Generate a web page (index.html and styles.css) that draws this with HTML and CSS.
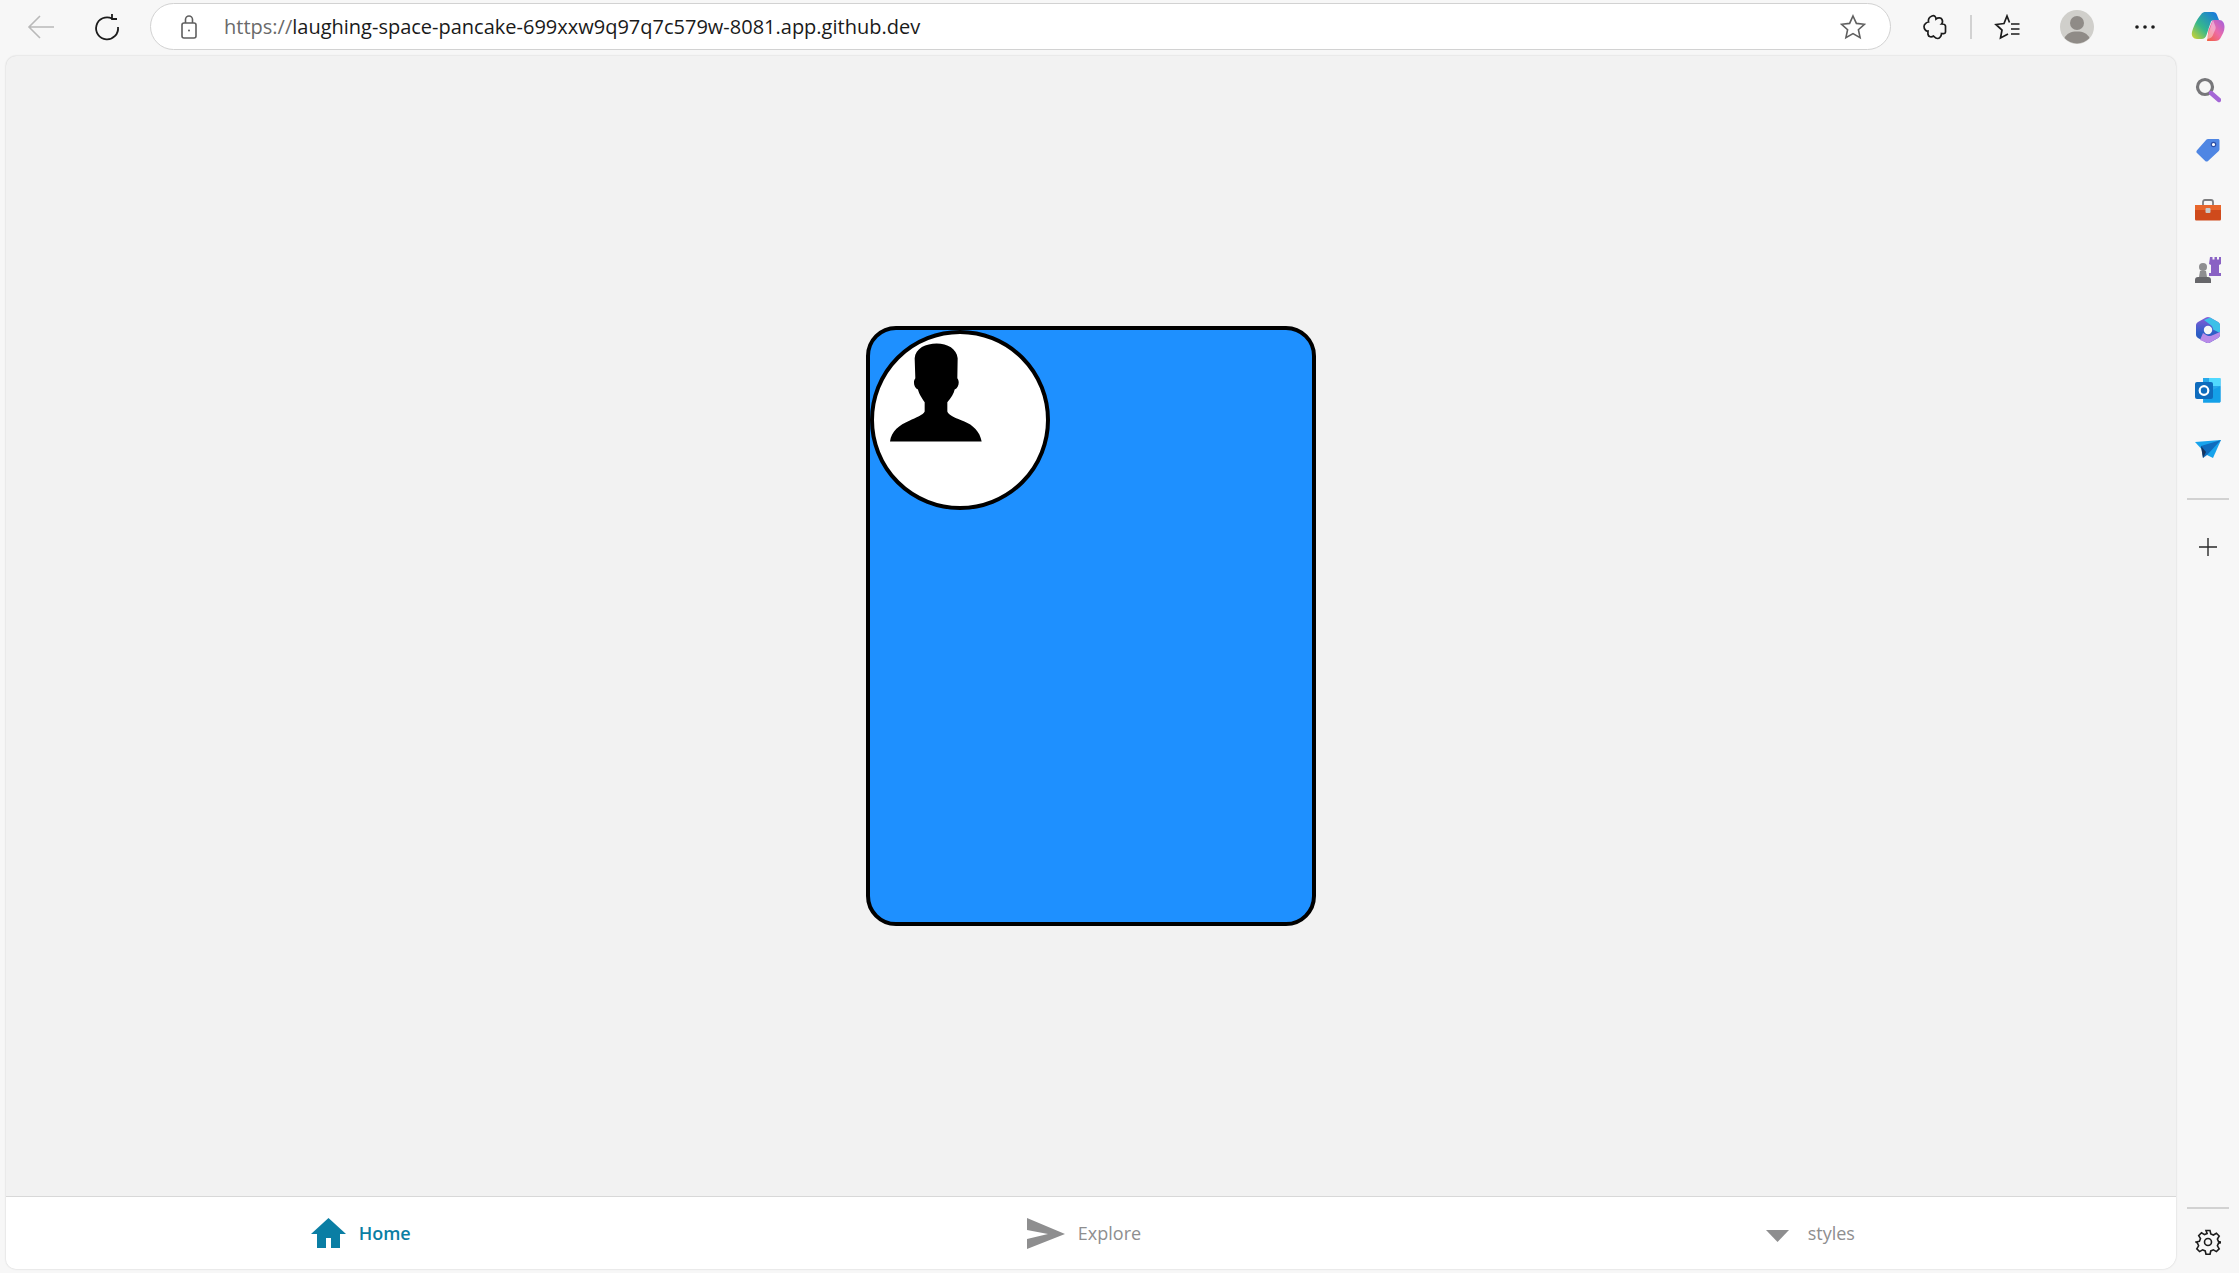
FILE: index.html
```html
<!DOCTYPE html>
<html lang="en">

<head>
  <meta charset="UTF-8">
  <title>laughing-space-pancake</title>
  <link rel="stylesheet" href="styles.css">
</head>

<body>
  <!-- Browser toolbar -->
  <header class="toolbar">
    <span class="toolButton backButton">
      <svg width="28" height="26" viewBox="0 0 28 26" fill="none" stroke="#b9b9b9" stroke-width="1.6"><path d="M27 13H3M13 2 2 13l11 11"/></svg>
    </span>
    <span class="toolButton reloadButton">
      <svg width="28" height="28" viewBox="0 0 28 28" fill="none" stroke="#1c1c1c" stroke-width="1.8"><path d="M19 5.500A11 11 0 1 0 25 14M19 1v5h5"/></svg>
    </span>
    <div class="addressBar">
      <svg class="lockIcon" width="16" height="24" viewBox="0 0 16 24" fill="none" stroke="#5f5f5f" stroke-width="1.6"><rect x="1" y="8" width="14" height="15" rx="2"/><path d="M4.500 8V4.500a3.500 3.500 0 0 1 7 0V8"/><circle cx="8" cy="15.500" r="1" fill="#5f5f5f" stroke="none"/></svg>
      <span class="url"><span class="urlScheme">https://</span>laughing-space-pancake-699xxw9q97q7c579w-8081.app.github.dev</span>
      <svg class="starIcon" width="26" height="26" viewBox="0 0 26 26" fill="none" stroke="#5f5f5f" stroke-width="1.6"><path d="m13 2 3.400 7.400 8 .9-6 5.400 1.700 8L13 19.600l-7.100 4.100 1.700-8-6-5.400 8-.9z"/></svg>
    </div>
    <span class="toolButton extButton">
      <svg width="24" height="26" viewBox="0 0 24 26" fill="none" stroke="#1c1c1c" stroke-width="1.7"><path d="M9 2c2.500-1 4 1 4 3 2-1.500 5-1.500 6 .5s.5 3.500-.5 4.500c2 0 4 1 4 2v6c0 1.500-2 2-4 1.500 0 2.500-2 5-4 5s-3-1.500-4-2.500c-2 1.500-5 1-5.500-1.500-.2-1.500 0-3 0-3.500C3 17.500 1 15 1 12.500S4 8 5.500 8C5 5.500 6.500 3 9 2z"/></svg>
    </span>
    <span class="toolDivider"></span>
    <span class="toolButton favButton">
      <svg width="26" height="26" viewBox="0 0 26 26" fill="none" stroke="#1c1c1c" stroke-width="1.7"><path d="M15.500 8.500 13 2l-3 7.500-8 1 6 5.500-1.500 8L14 20M17 10h8.500M17 15h8.500M17 20h8.500"/></svg>
    </span>
    <span class="profile">
      <svg width="34" height="34" viewBox="0 0 34 34"><circle cx="17" cy="17" r="17" fill="#d0cfcb"/><circle cx="17" cy="13" r="7" fill="#8f8b87"/><path d="M4.500 28C7 23 11 21.500 17 21.500S27 23 29.500 28A17 17 0 0 1 4.500 28z" fill="#8f8b87"/></svg>
    </span>
    <span class="toolButton moreButton">
      <svg width="20" height="4" viewBox="0 0 20 4" fill="#1c1c1c"><circle cx="2" cy="2" r="1.800"/><circle cx="10" cy="2" r="1.800"/><circle cx="18" cy="2" r="1.800"/></svg>
    </span>
    <span class="toolButton copilotButton">
      <svg width="34" height="32" viewBox="0 0 34 32">
        <defs>
          <linearGradient id="copA" x1="0" y1="1" x2="1" y2="0"><stop offset="0" stop-color="#d8d42c"/><stop offset=".4" stop-color="#36b88c"/><stop offset="1" stop-color="#1470e8"/></linearGradient>
          <linearGradient id="copB" x1="0" y1="1" x2="1" y2="0"><stop offset="0" stop-color="#f4603c"/><stop offset=".5" stop-color="#ec6ba8"/><stop offset="1" stop-color="#a05fe0"/></linearGradient>
        </defs>
        <path d="M16 30h8c3 0 4.500-1 5.500-3 2-3.500 4-7 4-11 0-4-2-7-5-7h-7l-4 10z" fill="url(#copB)"/>
        <path d="M10 3.500C11 1.500 13 1 15 1h7c2 0 3.500 1 4 3l2 5h-5c-2 0-3 1-3.500 3l-4 12c-.8 2.500-2.500 4-5 4H6c-3.500 0-6-3-5-7 1-4 4-12 9-17.500z" fill="url(#copA)"/>
        <path d="M22 9 15.500 28c2.500 0 5-1 6-3l3-7c.5-1.500 0-3-1-5z" fill="#fff" opacity=".4"/>
      </svg>
    </span>
  </header>

  <div class="main">
    <!-- Page area -->
    <div class="panel">
      <div class="content">
        <div class="card">
          <div class="avatar">
            <svg class="silhouette" width="92" height="99" viewBox="122 85 276 296"><path d="M122 380C126 350 150 330 180 318C200 308 222 300 226 290L226 262C214 245 208 234 206 224C194 220 190 200 198 190L196 130C198 100 230 86 262 86C295 86 322 102 325 130L324 190C332 200 328 220 316 224C314 235 305 250 294 262L294 290C298 302 320 310 345 320C370 330 392 350 397 380Z"/></svg>
          </div>
        </div>
      </div>

      <nav class="tabBar">
        <a class="tab tabActive">
          <svg width="35" height="30" viewBox="0 0 35 30" fill="#0a7ea4"><path d="M17.500 0 35 16h-6v14h-9V20h-5v10H6V16H0z"/></svg>
          <span>Home</span>
        </a>
        <a class="tab">
          <svg width="38" height="31" viewBox="0 0 38 31" fill="#8e8e8f"><path d="M0 0 38 16 0 31V21L21 16 0 12z"/></svg>
          <span>Explore</span>
        </a>
        <a class="tab">
          <svg class="caret" width="23" height="12" viewBox="0 0 23 12" fill="#8e8e8f"><path d="M0 0H23L11.500 12z"/></svg>
          <span>styles</span>
        </a>
      </nav>
    </div>

    <!-- Edge sidebar -->
    <aside class="sidebar">
      <span class="sideItem">
        <svg width="26" height="26" viewBox="0 0 26 26" fill="none"><circle cx="10" cy="10" r="7.500" stroke="#77777a" stroke-width="3.200"/><path d="M16 16l8 7" stroke="#a467d6" stroke-width="4.400" stroke-linecap="round"/></svg>
      </span>
      <span class="sideItem">
        <svg width="26" height="26" viewBox="0 0 26 26"><path d="M13 2h10c1 0 1.500.6 1.500 1.500V12c0 1-.4 1.600-1 2.200L13 24c-.8.800-2 .8-2.800 0L2 16c-.8-.8-.8-2 0-2.800L11.500 2.600c.4-.4 1-.6 1.500-.6z" fill="#4f86e3"/><circle cx="18.500" cy="7.500" r="2.200" fill="#fff" stroke="#2c4fa8" stroke-width="1.200"/></svg>
      </span>
      <span class="sideItem">
        <svg width="28" height="24" viewBox="0 0 28 24"><path d="M9 8V4c0-1 .6-2 2-2h6c1.400 0 2 1 2 2v4" fill="none" stroke="#7d7d7f" stroke-width="1.800"/><path d="M1 7h26v6H1z" fill="#e8662c"/><path d="M1 12h26v9c0 1-.6 1.500-1.500 1.500h-23C1.600 22.500 1 22 1 21z" fill="#cf4a1c"/><rect x="11.500" y="10" width="5" height="5" rx="1" fill="#c9c9c9"/></svg>
      </span>
      <span class="sideItem">
        <svg width="28" height="28" viewBox="0 0 28 28"><path d="M16 1h2.500v2.500h2V1h2.500v2.500h2V1H27v7l-2 1v8h2v3H15v-3h2V9l-2-1z" fill="#8a62c4"/><circle cx="9" cy="11" r="4" fill="#8e8e90"/><path d="M6 15h6l1 6H5z" fill="#8e8e90"/><path d="M1 27v-3c0-2 1-3 3-3h10c2 0 3 1 3 3v3z" fill="#66666a"/></svg>
      </span>
      <span class="sideItem">
        <svg width="26" height="28" viewBox="0 0 26 28"><defs><linearGradient id="msA" x1="0" y1="0" x2="0" y2="1"><stop offset="0" stop-color="#8a5ad8"/><stop offset=".6" stop-color="#2f5fc8"/><stop offset="1" stop-color="#2a55b8"/></linearGradient></defs><path d="M11 1.500c1.300-.7 2.700-.7 4 0l8 4.500c1.300.7 2 2 2 3.500v9c0 1.500-.7 2.800-2 3.500l-8 4.500c-1.300.7-2.700.7-4 0l-8-4.500C1.700 21.300 1 20 1 18.500v-9C1 8 1.700 6.700 3 6z" fill="url(#msA)"/><path d="M15 1.500l8 4.500c1.300.7 2 2 2 3.500V17l-7-3.500c0-2-1-4-3-5L9 4z" fill="#3cc0e8"/><path d="M8 17l4 2.500c2 1 4 .7 6-.5l7-3v2.500c0 1.500-.7 2.800-2 3.500l-8 4.500c-1.300.7-2.700.7-4 0L5 24z" fill="#b88ae8"/><circle cx="13" cy="14" r="4.200" fill="#f7f7f7"/></svg>
      </span>
      <span class="sideItem">
        <svg width="26" height="26" viewBox="0 0 26 26"><path d="M8 1h16c1 0 1.500.5 1.500 1.500V24c0 1-.5 1.500-1.500 1.500H8z" fill="#28a8ea"/><path d="M14 1h11.500v8H14z" fill="#50d9ff"/><path d="M14 15l11.500-6v15c0 1-.5 1.500-1.500 1.500H8z" fill="#14a0e8"/><rect x="0" y="5" width="18" height="17" rx="2" fill="#0f6cbd"/><circle cx="9" cy="13.500" r="4.300" fill="none" stroke="#fff" stroke-width="2.200"/></svg>
      </span>
      <span class="sideItem">
        <svg width="26" height="20" viewBox="0 0 26 20"><path d="M0 2 26 0 18 18l-6-3z" fill="#17a3ec"/><path d="M26 0 6 6l2 12 4-3z" fill="#0f6cbd"/><path d="M6 6l2 12 3-6z" fill="#17345f"/></svg>
      </span>
      <span class="sideDivider"></span>
      <span class="sideItem plusItem">
        <svg width="18" height="18" viewBox="0 0 18 18" stroke="#2a2a2a" stroke-width="1.400"><path d="M9 0v18M0 9h18"/></svg>
      </span>
      <span class="sideSpacer"></span>
      <span class="sideDivider"></span>
      <span class="sideItem gearItem">
        <svg width="26" height="26" viewBox="0 0 26 26" fill="none" stroke="#1c1c1c" stroke-width="1.600"><circle cx="13" cy="13" r="3.500"/><path d="M11 1.500h4l.8 3.400 2.600 1.100 3-1.800 2.800 2.800-1.800 3 1.100 2.600 3.400.8v0l-3.400.8-1.100 2.600 1.800 3-2.800 2.800-3-1.800-2.600 1.100-.8 3.400h-4l-.8-3.400-2.600-1.100-3 1.800-2.800-2.800 1.800-3-1.100-2.600L1 13l3.400-.8 1.100-2.600-1.800-3 2.800-2.800 3 1.800 2.600-1.100z"/></svg>
      </span>
    </aside>
  </div>
</body>

</html>
```

FILE: styles.css
```css
html,
body {
  height: 100%;
  margin: 0;
}

body {
  display: flex;
  flex-direction: column;
  overflow: hidden;
  background-color: #f7f7f7;
  font-family: 'Open Sans', 'Noto Sans', sans-serif;
}

/* Browser toolbar */
.toolbar {
  display: flex;
  align-items: center;
  height: 56px;
  box-sizing: border-box;
  flex-shrink: 0;
  padding: 0 0 3px 19px;
}

.toolButton {
  display: flex;
  align-items: center;
  justify-content: center;
  width: 44px;
  height: 44px;
  flex-shrink: 0;
}

.reloadButton {
  margin-left: 22px;
}

.addressBar {
  display: flex;
  align-items: center;
  width: 1741px;
  height: 47px;
  margin-left: 21px;
  padding: 0 24px 0 30px;
  box-sizing: border-box;
  background-color: #fff;
  border: 1.5px solid #d2d2d2;
  border-radius: 24px;
  flex-shrink: 0;
}

.lockIcon {
  margin-right: 27px;
}

.url {
  flex: 1;
  font-size: 20px;
  color: #1a1a1a;
}

.urlScheme {
  color: #6a6a6a;
}

.extButton {
  margin-left: 22px;
}

.toolDivider {
  width: 2px;
  height: 24px;
  margin: 0 13px;
  background-color: #d2d2d2;
}

.profile {
  display: flex;
  margin-left: 31px;
}

.moreButton {
  margin-left: 29px;
}

.copilotButton {
  margin-left: 19px;
}

/* Page area */
.main {
  display: flex;
  flex: 1;
  min-height: 0;
}

.panel {
  display: flex;
  flex-direction: column;
  width: 2170px;
  margin: 0 0 4px 6px;
  box-sizing: border-box;
  background-color: #f2f2f2;
  border-radius: 10px 10px 14px 10px;
  box-shadow: 0 0 2px rgba(0, 0, 0, 0.2);
  overflow: hidden;
}

.content {
  display: flex;
  flex: 1;
  align-items: center;
  justify-content: center;
}

.card {
  width: 450px;
  height: 600px;
  box-sizing: border-box;
  background-color: #1e90ff;
  border: 4px solid #000;
  border-radius: 30px;
}

.avatar {
  width: 180px;
  height: 180px;
  box-sizing: border-box;
  padding: 9px 0 0 16px;
  background-color: #fff;
  border: 4px solid #000;
  border-radius: 50%;
}

.silhouette {
  display: block;
  filter: blur(0.6px);
}

/* Bottom tabs */
.tabBar {
  display: flex;
  height: 73px;
  box-sizing: border-box;
  background-color: #fff;
  border-top: 1px solid #d8d8d8;
}

.tab {
  display: flex;
  flex: 1;
  align-items: center;
  justify-content: center;
  gap: 13px;
  padding-right: 14px;
  font-size: 18px;
  font-weight: 500;
  color: #8e8e8f;
}

.tabActive {
  color: #0a7ea4;
  font-weight: 600;
}

.caret {
  margin: 6px 6px 0 6px;
}

/* Edge sidebar */
.sidebar {
  display: flex;
  flex-direction: column;
  align-items: center;
  flex: 1;
  padding: 4px 0 8px;
}

.sideItem {
  display: flex;
  align-items: center;
  justify-content: center;
  height: 60px;
  flex-shrink: 0;
}

.sideDivider {
  width: 42px;
  height: 2px;
  margin-top: 18px;
  background-color: #d2d2d2;
  flex-shrink: 0;
}

.plusItem {
  height: 18px;
  margin-top: 38px;
}

.sideSpacer {
  flex: 1;
}

.gearItem {
  height: 46px;
  margin-top: 10px;
}
```
